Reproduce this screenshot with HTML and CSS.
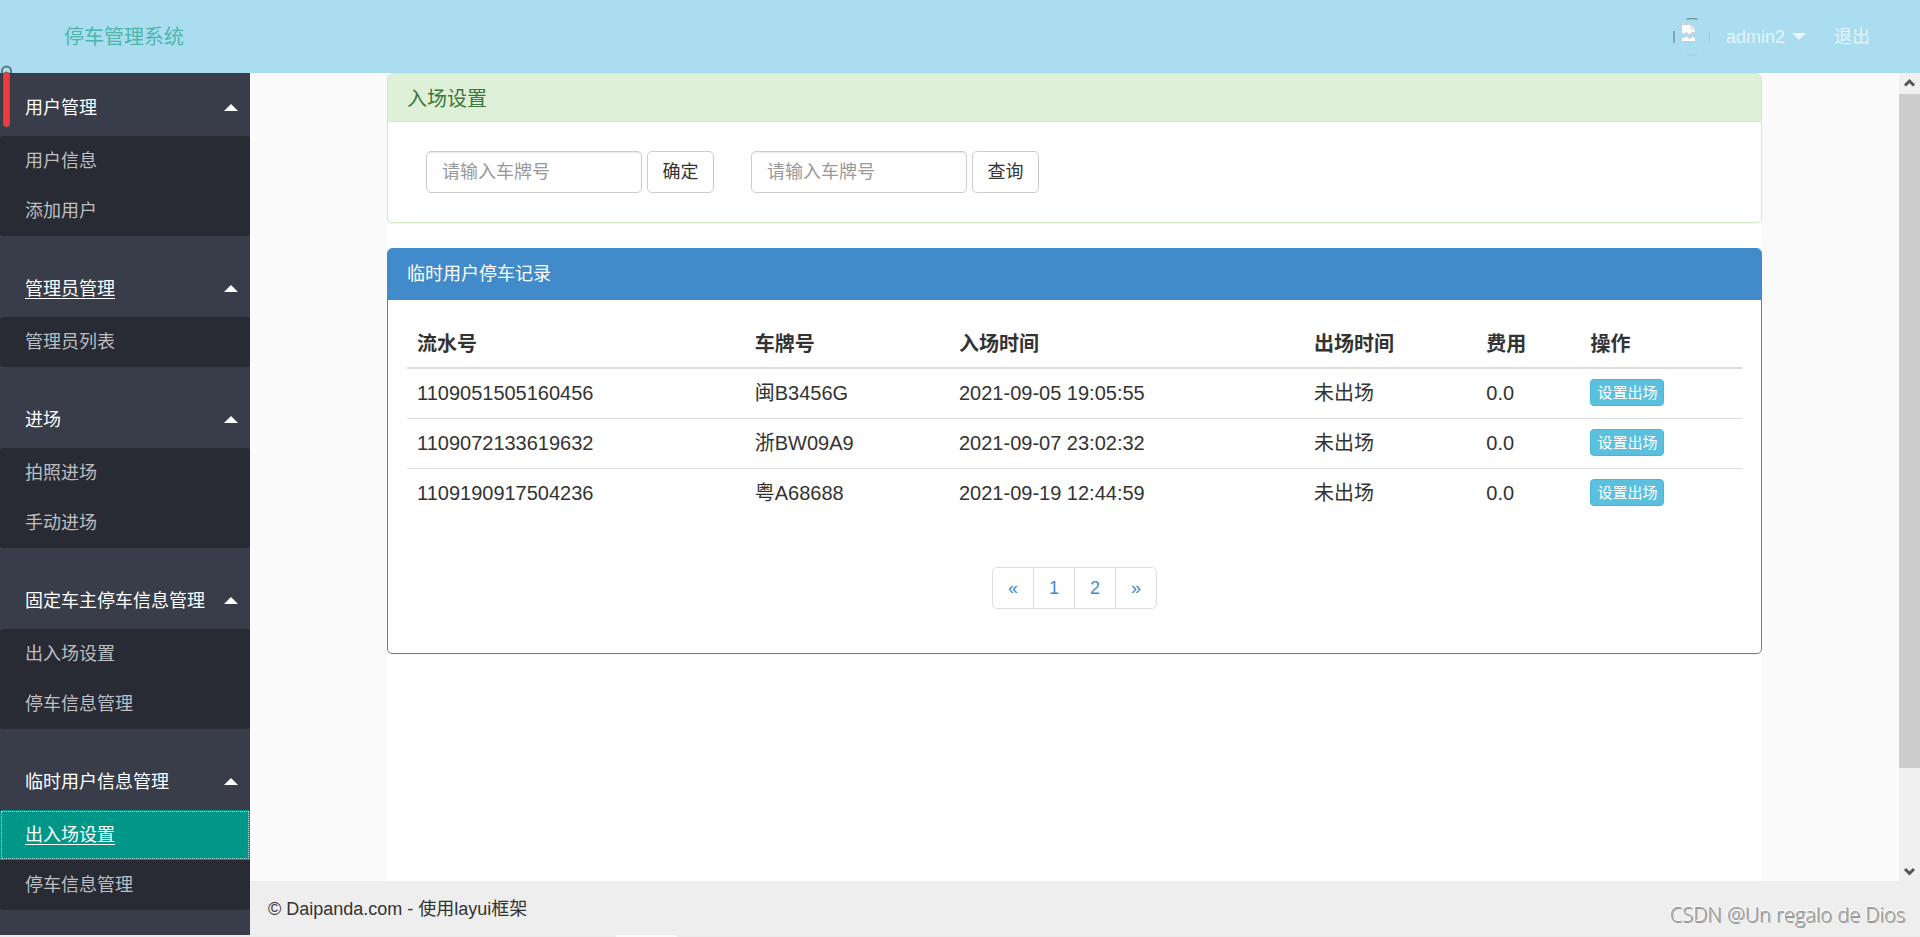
FILE: index.html
```html
<!DOCTYPE html>
<html lang="zh-CN">
<head>
<meta charset="utf-8">
<title>停车管理系统</title>
<link rel="stylesheet" href="styles.css">
</head>
<body>
<div class="app">
  <header class="header">
    <a class="logo" href="#">停车管理系统</a>
    <nav class="user-nav">
      <a class="user" href="#">
        <svg class="avatar" width="38" height="38" viewBox="0 0 38 38" role="img" aria-label="头像">
          <path d="M13.500 1.200Q19 0 24.500 1.200" fill="none" stroke="#6f7274" stroke-width="1"/>
          <path d="M1 13V25" fill="none" stroke="#5f6b70" stroke-width="1"/>
          <path d="M36.500 14V24M14 37H24" fill="none" stroke="#b5c4ca" stroke-width="1"/>
          <path d="M8.500 6.500H18L22.500 11V15.500L19.500 14L16.500 17L13.500 14.500L10.500 16.500L8.500 15Z" fill="#fff" stroke="#ccc"/>
          <path d="M18 6.500V11H22.500" fill="none" stroke="#ccc"/>
          <path d="M8.500 18.500L10.500 20L13.500 18L16.500 20.500L19.500 18.500L22.500 19.500V23.500H8.500Z" fill="#fff" stroke="#ccc"/>
        </svg>
        <span>admin2</span>
        <i class="caret caret-down"></i>
      </a>
      <a class="logout" href="#">退出</a>
    </nav>
  </header>
  <div class="body">
    <nav class="side">
      <svg class="side-marker" width="14" height="64" viewBox="0 0 14 64" aria-hidden="true">
        <path d="M2 8V6A4.500 4.500 0 0 1 11 6V8" fill="none" stroke="#62757e" stroke-width="2"/>
        <rect x="3.500" y="7" width="6" height="55" rx="3" fill="#ef3b3d" stroke="#66686e" stroke-width="1"/>
      </svg>
      <section class="group">
        <a class="group-title" href="#">用户管理<i class="caret caret-up"></i></a>
        <div class="group-items"><a href="#">用户信息</a><a href="#">添加用户</a></div>
      </section>
      <section class="group">
        <a class="group-title hovered" href="#">管理员管理<i class="caret caret-up"></i></a>
        <div class="group-items"><a href="#">管理员列表</a></div>
      </section>
      <section class="group">
        <a class="group-title" href="#">进场<i class="caret caret-up"></i></a>
        <div class="group-items"><a href="#">拍照进场</a><a href="#">手动进场</a></div>
      </section>
      <section class="group">
        <a class="group-title" href="#">固定车主停车信息管理<i class="caret caret-up"></i></a>
        <div class="group-items"><a href="#">出入场设置</a><a href="#">停车信息管理</a></div>
      </section>
      <section class="group">
        <a class="group-title" href="#">临时用户信息管理<i class="caret caret-up"></i></a>
        <div class="group-items"><a class="active" href="#">出入场设置</a><a href="#">停车信息管理</a></div>
      </section>
    </nav>
    <div class="content">
      <div class="viewport">
        <main class="page">
          <div class="container">
            <section class="panel panel-success">
              <h3 class="panel-heading">入场设置</h3>
              <div class="forms">
                <form class="plate-form">
                  <input type="text" placeholder="请输入车牌号" aria-label="入场车牌号">
                  <button type="button">确定</button>
                </form>
                <form class="plate-form">
                  <input type="text" placeholder="请输入车牌号" aria-label="查询车牌号">
                  <button type="button">查询</button>
                </form>
              </div>
            </section>
            <section class="panel panel-primary">
              <h3 class="panel-heading">临时用户停车记录</h3>
              <div class="records">
                <table class="table">
                  <thead>
                    <tr><th class="c-id">流水号</th><th class="c-plate">车牌号</th><th class="c-in">入场时间</th><th class="c-out">出场时间</th><th class="c-fee">费用</th><th class="c-op">操作</th></tr>
                  </thead>
                  <tbody>
                    <tr><td>1109051505160456</td><td>闽B3456G</td><td>2021-09-05 19:05:55</td><td>未出场</td><td>0.0</td><td><button class="btn-xs" type="button">设置出场</button></td></tr>
                    <tr><td>1109072133619632</td><td>浙BW09A9</td><td>2021-09-07 23:02:32</td><td>未出场</td><td>0.0</td><td><button class="btn-xs" type="button">设置出场</button></td></tr>
                    <tr><td>1109190917504236</td><td>粤A68688</td><td>2021-09-19 12:44:59</td><td>未出场</td><td>0.0</td><td><button class="btn-xs" type="button">设置出场</button></td></tr>
                  </tbody>
                </table>
                <nav class="pagination" aria-label="分页">
                  <a href="#">«</a><a href="#">1</a><a href="#">2</a><a href="#">»</a>
                </nav>
              </div>
            </section>
          </div>
        </main>
        <div class="scrollbar" aria-hidden="true">
          <svg class="scroll-arrow" viewBox="0 0 21 21"><path d="M6 12.500L10.500 8L15 12.500" fill="none" stroke="#555" stroke-width="3"/></svg>
          <div class="scroll-track"><div class="scroll-thumb"></div></div>
          <svg class="scroll-arrow" viewBox="0 0 21 21"><path d="M6 9L10.500 13.500L15 9" fill="none" stroke="#555" stroke-width="3"/></svg>
        </div>
      </div>
      <footer class="footer">© Daipanda.com - 使用layui框架</footer>
    </div>
  </div>
  <div class="bottom-edge"></div>
  <div class="watermark">CSDN @Un regalo de Dios</div>
</div>
</body>
</html>
```
FILE: styles.css
```css
* { box-sizing: border-box; }
body {
  margin: 0;
  color: #333;
  background: #fff;
  font: 18px/26px "Liberation Sans", Arial, "Noto Sans CJK SC", sans-serif;
}
a { color: inherit; text-decoration: none; }
h3 { margin: 0; font-weight: 400; }
button, input { font: inherit; }

.app { position: relative; display: flex; flex-direction: column; height: 100vh; overflow: hidden; }

.header {
  flex: none;
  display: flex;
  align-items: center;
  justify-content: space-between;
  height: 73px;
  padding: 0 50px 0 64px;
  background: #aaddf0;
}
.logo { color: #4db6ac; font-size: 20px; }
.user-nav { display: flex; align-items: center; gap: 28px; color: rgba(255, 255, 255, .7); }
.user { display: flex; align-items: center; }
.avatar { margin-right: 15px; }

.caret { width: 0; height: 0; border: 7px solid transparent; }
.caret-down { margin: 7px 0 0 7px; border-top-color: currentColor; }
.caret-up { margin-bottom: 8px; border-bottom-color: #fff; }

.body { flex: 1; display: flex; min-height: 0; }
.side {
  position: relative;
  flex: none;
  width: 250px;
  padding-top: 6px;
  background: #393d49;
  color: #fff;
}
.side-marker { position: absolute; left: 0; top: -8px; }
.group { margin-bottom: 24px; }
.group-title {
  display: flex;
  align-items: center;
  justify-content: space-between;
  height: 57px;
  padding: 0 12px 0 25px;
}
.group-items { overflow: hidden; border-radius: 3px; background: #282b33; color: #bdbec1; }
.group-items a { display: block; padding: 12px 25px; }
.hovered, .group-items .active { text-decoration: underline; text-underline-offset: 3px; }
.group-items .active {
  background: #009688;
  color: #fff;
  outline: 1px dotted #a8dcd6;
  outline-offset: -2px;
}

.content { flex: 1; display: flex; flex-direction: column; min-width: 0; }
.viewport { flex: 1; display: flex; min-height: 0; }
.page { flex: 1; min-width: 0; background: #fafafa; }
.container { max-width: 1375px; height: 100%; margin: 0 auto; background: #fff; }

.panel { margin-bottom: 25px; border: 1px solid; border-radius: 5px; box-shadow: 0 1px 1px rgba(0, 0, 0, .05); }
.panel-success { border-color: #d6e9c6; }
.panel-primary { border-color: #428bca; }
.panel-heading { padding: 12px 19px 13px; border-radius: 4px 4px 0 0; }
.panel-success .panel-heading {
  padding: 12px 19px 9px;
  border-bottom: 1px solid #d6e9c6;
  background: #dff0d8;
  color: #3c763d;
  font-size: 20px;
}
.panel-primary .panel-heading { background: #428bca; color: #fff; font-size: 18px; }

.forms { display: flex; gap: 37px; padding: 29px 38px; }
.plate-form { display: flex; gap: 5px; }
.plate-form input {
  width: 216px;
  height: 42px;
  padding: 0 15px;
  border: 1px solid #ccc;
  border-radius: 5px;
  color: #555;
  background: #fff;
  box-shadow: inset 0 1px 1px rgba(0, 0, 0, .08);
}
.plate-form input::placeholder { color: #999; }
.plate-form button {
  width: 67px;
  height: 42px;
  padding: 0;
  border: 1px solid #ccc;
  border-radius: 5px;
  background: #fff;
  color: #333;
}

.records { padding: 19px 19px 44px; }
.table { width: 100%; table-layout: fixed; border-collapse: collapse; font-size: 20px; line-height: 29px; }
.table th { padding: 11px 10px 8px; border-bottom: 2px solid #ddd; text-align: left; }
.table td { padding: 10px; border-top: 1px solid #ddd; vertical-align: top; }
.table tbody tr:first-child td { border-top: 0; }
.c-id { width: 25.3%; }
.c-plate { width: 15.3%; }
.c-in { width: 26.6%; }
.c-out { width: 12.9%; }
.c-fee { width: 7.8%; }
.btn-xs {
  display: block;
  padding: 1px 6px;
  border: 1px solid #46b8da;
  border-radius: 4px;
  background: #5bc0de;
  color: #fff;
  font-size: 15px;
  line-height: 23px;
}

.pagination { display: flex; justify-content: center; margin-top: 49px; color: #428bca; }
.pagination a {
  min-width: 42px;
  padding: 7px 15px;
  margin-left: -1px;
  border: 1px solid #ddd;
  text-align: center;
}
.pagination a:first-child { margin-left: 0; border-radius: 5px 0 0 5px; }
.pagination a:last-child { border-radius: 0 5px 5px 0; }

.scrollbar { flex: none; display: flex; flex-direction: column; width: 21px; background: #f0f0f0; }
.scroll-arrow { flex: none; width: 21px; height: 21px; }
.scroll-track { flex: 1; }
.scroll-thumb { height: 88%; background: #cdcdcd; }

.footer { flex: none; padding: 15px 18px 13px; background: #eee; }
.bottom-edge {
  flex: none;
  height: 2px;
  background: linear-gradient(90deg, #ececec 616px, #fafafa 616px, #fafafa 677px, #ececec 677px);
}
.watermark {
  position: absolute;
  right: 15px;
  bottom: 9px;
  color: #999;
  font: 300 20px/26px "Open Sans", "Noto Sans", sans-serif;
  text-shadow: -1px -1px 0 #fff, 1px 1px 0 #999;
}
```
